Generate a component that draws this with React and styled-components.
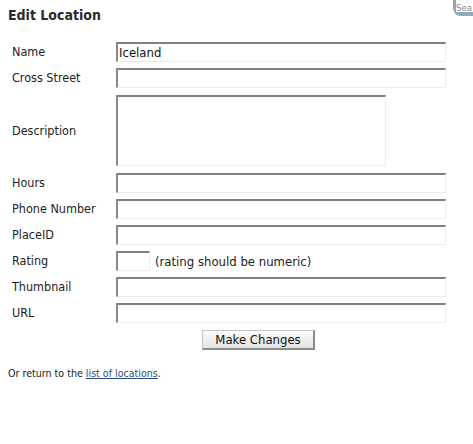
import React from "react";
import styled, { createGlobalStyle } from "styled-components";

const GlobalStyle = createGlobalStyle`
  html, body {
    margin: 0;
    padding: 0;
    background: #ffffff;
  }
  body {
    font-family: "DejaVu Sans Condensed", "DejaVu Sans", Verdana, sans-serif;
    color: #1a1a1a;
  }
`;

const Page = styled.div`
  position: relative;
  width: 473px;
  height: 444px;
  padding: 6px 8px 0 8px;
  box-sizing: border-box;
  overflow: hidden;
`;

const SearchCorner = styled.div`
  position: absolute;
  top: -6px;
  right: 0;
  width: 20px;
  height: 22px;
  background: #8ea9b8;
  border-radius: 0 0 0 8px;
  padding: 4px 0 0 3px;
  box-sizing: border-box;
`;

const SearchInput = styled.div`
  background: #ffffff;
  height: 14px;
  font-size: 9.5px;
  line-height: 20px;
  color: #8a8a8a;
  white-space: nowrap;
`;

const Heading = styled.h2`
  margin: 0 0 18px 0;
  font-size: 14px;
  font-weight: bold;
  color: #2b2b2b;
  line-height: 18px;
`;

const FormTable = styled.table`
  border-collapse: separate;
  border-spacing: 0 6px;
  margin: -6px 0 0 0;
`;

const Label = styled.td`
  width: 104px;
  padding: 0 0 1px 4px;
  font-size: 12.5px;
  color: #222;
  vertical-align: middle;
  white-space: nowrap;
`;

const Field = styled.td`
  padding: 0;
  vertical-align: middle;
`;

const fieldBorder = `
  border-top: 2px solid #808080;
  border-left: 2px solid #8a8a8a;
  border-right: 1px solid #ececec;
  border-bottom: 1px solid #ececec;
  box-sizing: border-box;
  background: #ffffff;
  outline: none;
`;

const TextInput = styled.input`
  ${fieldBorder}
  display: block;
  width: ${(p) => p.$width || 330}px;
  height: 20px;
  margin: 0;
  padding: 0 1px;
  font-family: "DejaVu Sans Condensed", "DejaVu Sans", sans-serif;
  font-size: 13px;
  color: #111;
`;

const TextArea = styled.textarea`
  ${fieldBorder}
  display: block;
  width: 270px;
  height: 71px;
  margin: 1px 0;
  padding: 0;
  resize: none;
`;

const Inline = styled.div`
  display: flex;
  align-items: center;
  gap: 5px;
`;

const Hint = styled.span`
  font-size: 13px;
  color: #222;
`;

const SubmitRow = styled.div`
  display: flex;
  justify-content: flex-start;
  padding-left: 194px;
  margin-top: 1px;
`;

const Button = styled.button`
  width: 113px;
  height: 20px;
  padding: 0;
  font-family: "DejaVu Sans Condensed", "DejaVu Sans", sans-serif;
  font-size: 13px;
  color: #111;
  background: linear-gradient(#fbfbfb, #e4e4e4);
  border: 1px solid #c4c4c4;
  border-right: 2px solid #8c8c8c;
  border-bottom: 2px solid #8c8c8c;
  box-sizing: border-box;
`;

const Footer = styled.p`
  margin: 17px 0 0 0;
  font-size: 10.6px;
  color: #222;
`;

const Link = styled.a`
  color: #2c4a7c;
  text-decoration: underline;
`;

const fields = [
  { label: "Name", value: "Iceland" },
  { label: "Cross Street" },
  { label: "Description", area: true },
  { label: "Hours" },
  { label: "Phone Number" },
  { label: "PlaceID" },
  { label: "Rating", rating: true },
  { label: "Thumbnail" },
  { label: "URL" },
];

export default function App() {
  return (
    <>
      <GlobalStyle />
      <Page>
        <SearchCorner>
          <SearchInput>Sea</SearchInput>
        </SearchCorner>
        <Heading>Edit Location</Heading>
        <FormTable>
          <tbody>
            {fields.map((f) => (
              <tr key={f.label}>
                <Label>{f.label}</Label>
                <Field>
                  {f.area ? (
                    <TextArea />
                  ) : f.rating ? (
                    <Inline>
                      <TextInput $width={34} />
                      <Hint>(rating should be numeric)</Hint>
                    </Inline>
                  ) : (
                    <TextInput defaultValue={f.value || ""} />
                  )}
                </Field>
              </tr>
            ))}
          </tbody>
        </FormTable>
        <SubmitRow>
          <Button>Make Changes</Button>
        </SubmitRow>
        <Footer>
          Or return to the <Link href="#">list of locations</Link>.
        </Footer>
      </Page>
    </>
  );
}
